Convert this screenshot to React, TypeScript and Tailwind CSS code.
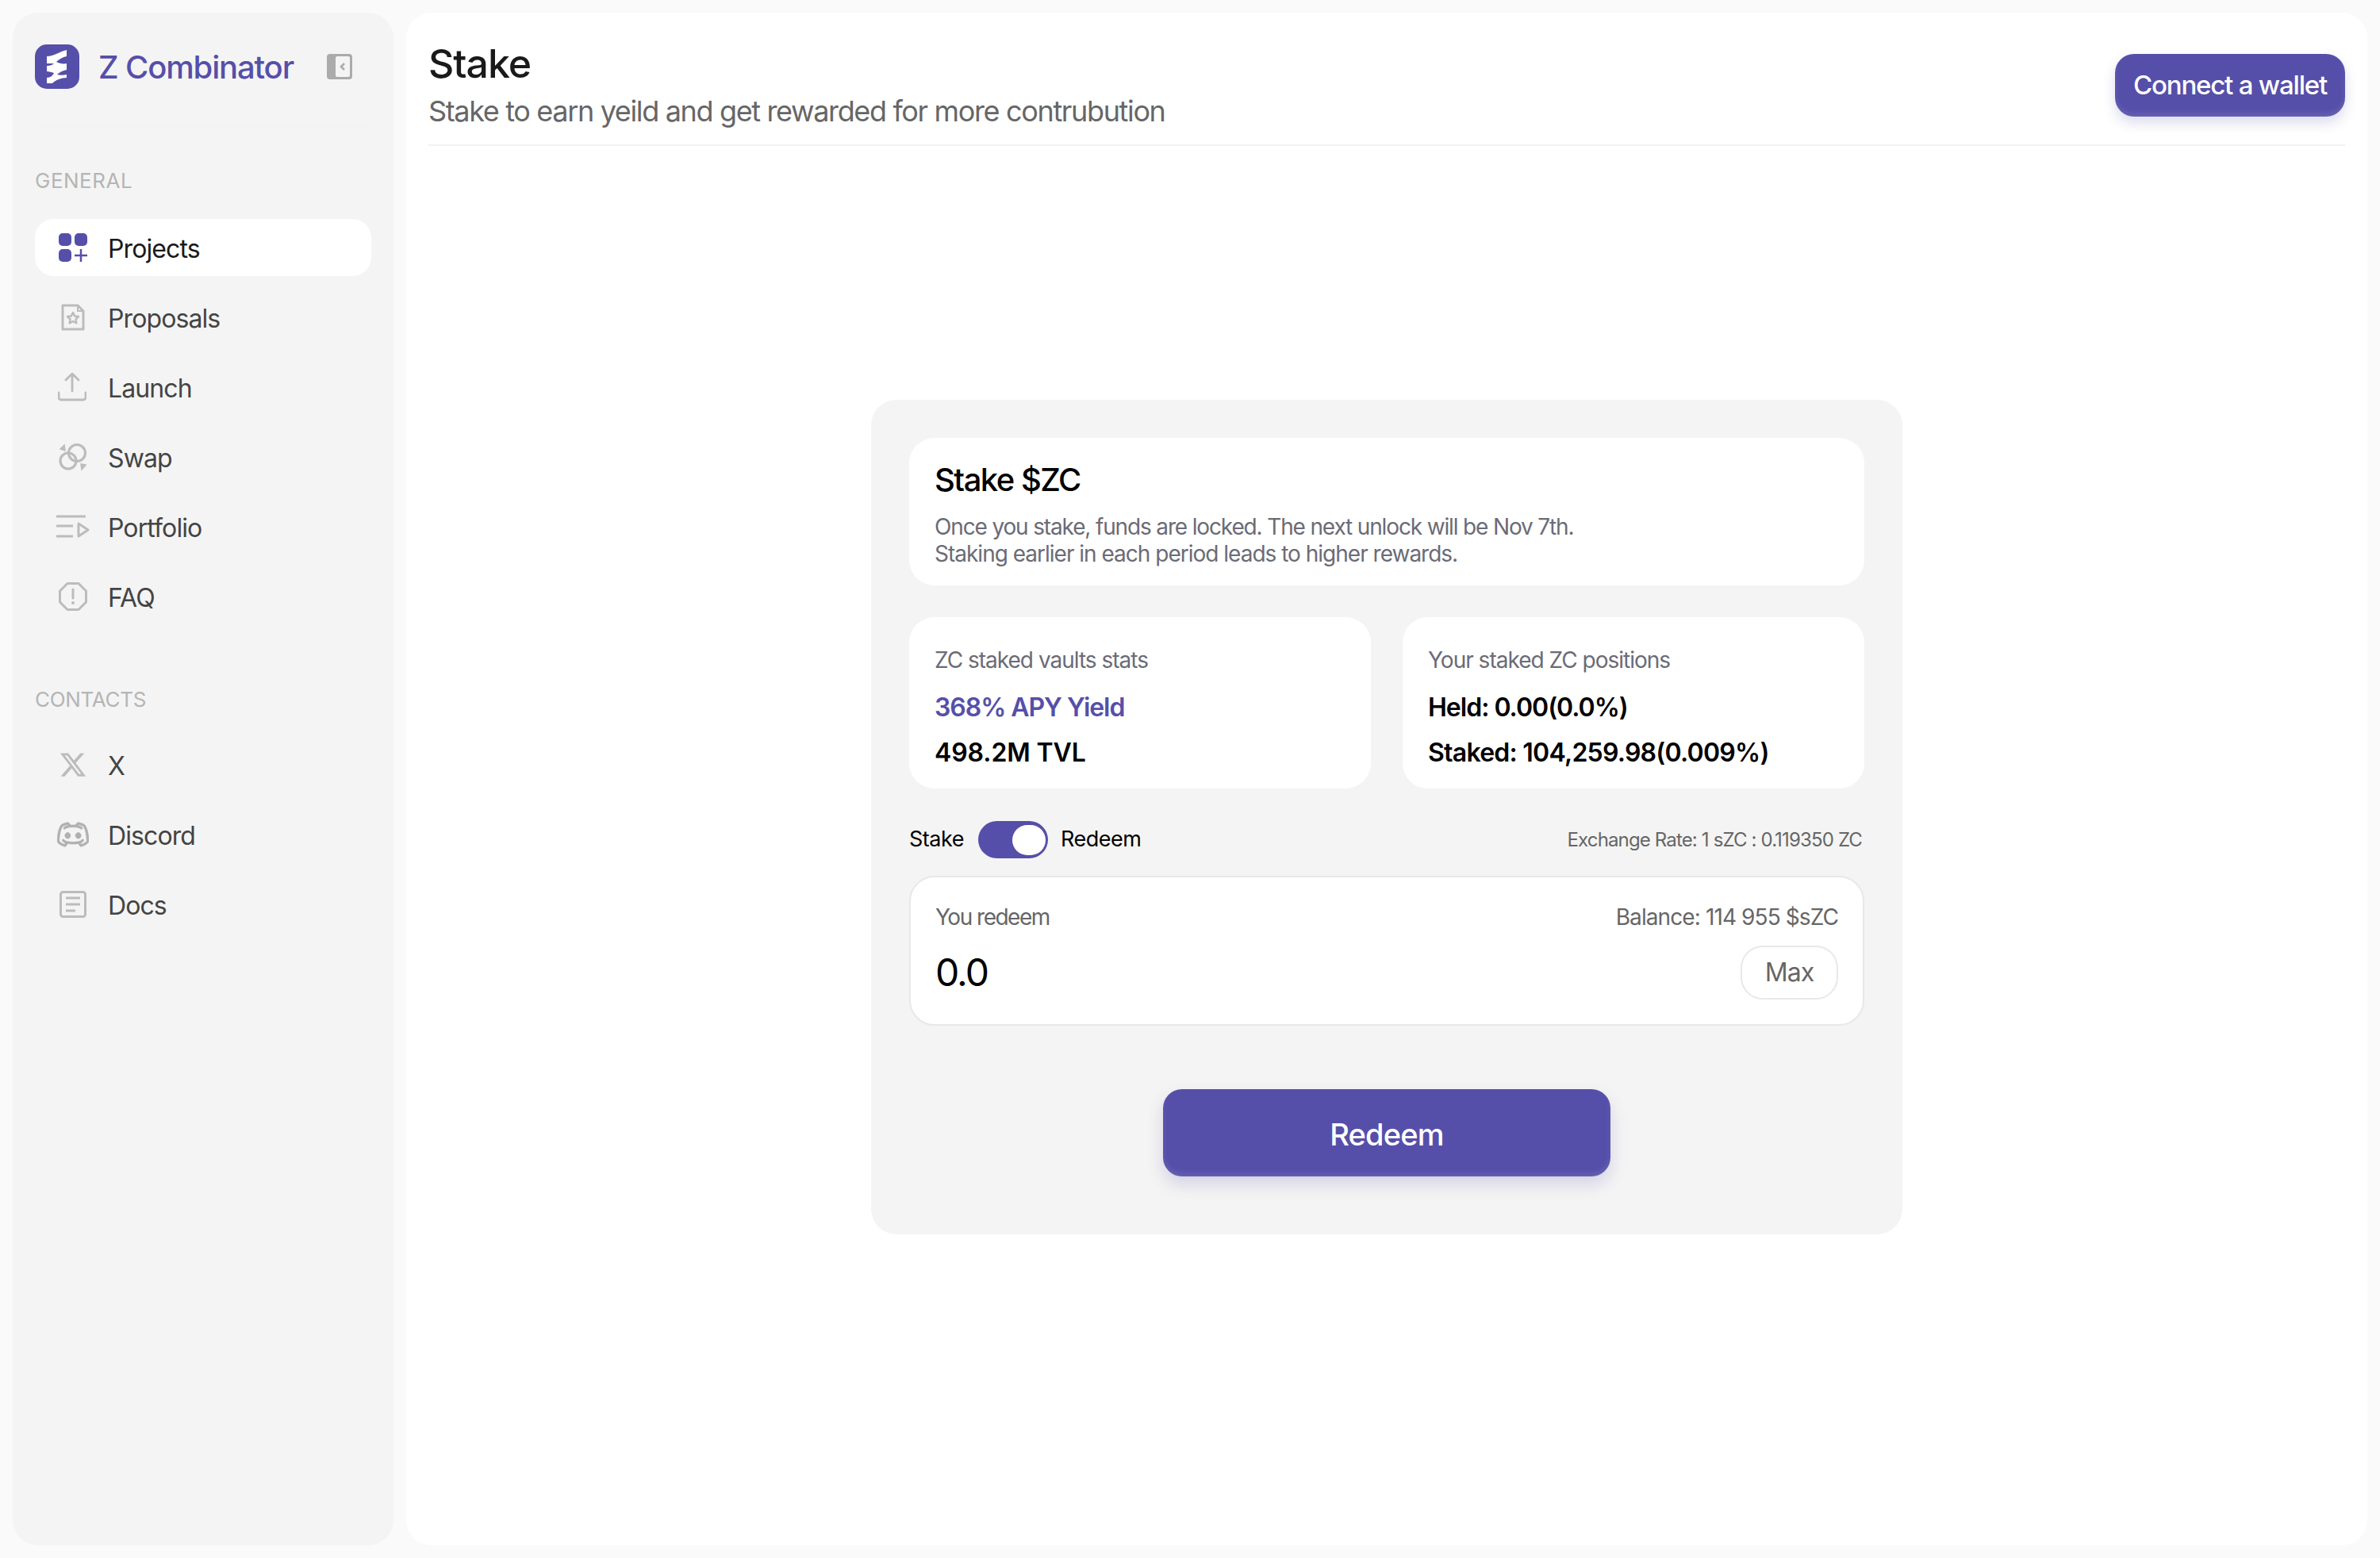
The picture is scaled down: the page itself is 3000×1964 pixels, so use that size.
import { FaXTwitter } from 'react-icons/fa6'
import { RxDiscordLogo } from 'react-icons/rx'

const sans = "font-['Inter',sans-serif]"

const Logo = () => (
  <svg viewBox="0 0 56 56" className="h-14 w-14 shrink-0">
    <rect width="56" height="56" rx="15" fill="#564fa9" />
    <path d="M15 15C24 15 31 9 40 7V15C35 16 30 19 27 22C31 24 36 25 40 24V32C35 33 31 35 28 38C32 39 36 39 40 38V42C33 42 26 45 22 49H15V42C19 42 23 39 24 36C21 35 18 34 15 34V27C19 27 22 26 24 24C21 24 18 24 15 24Z" fill="#fff" />
  </svg>
)

const CollapseIcon = () => (
  <svg viewBox="0 0 32 32" className="h-8 w-8">
    <rect width="32" height="32" rx="4" fill="#ababab" />
    <rect x="11" y="3" width="18" height="26" rx="2" fill="#f4f4f4" />
    <path d="M22 12l-4 4 4 4" fill="none" stroke="#ababab" strokeWidth="2.5" />
  </svg>
)

const ProjectsIcon = () => (
  <svg viewBox="0 0 36 36" className="h-9 w-9">
    <rect width="16" height="16" rx="5" fill="#564fa9" />
    <rect x="20" width="16" height="16" rx="5" fill="#564fa9" />
    <rect y="20" width="16" height="16" rx="5" fill="#564fa9" />
    <path d="M28 20v16M20 28h16" stroke="#564fa9" strokeWidth="2.5" />
  </svg>
)

const gray = '#bcbcbc'

const ProposalsIcon = () => (
  <svg viewBox="0 0 36 36" className="h-9 w-9" fill="none" stroke={gray} strokeWidth="3">
    <path d="M5 3h19l7 7v23H5z" strokeLinejoin="round" />
    <path d="M24 3v7h7" strokeWidth="2" />
    <path d="M18 12l2.200 4.400 4.800.7-3.500 3.400.8 4.800-4.300-2.300-4.300 2.300.8-4.800-3.500-3.400 4.800-.7z" strokeWidth="2.500" strokeLinejoin="round" />
  </svg>
)

const LaunchIcon = () => (
  <svg viewBox="0 0 36 36" className="-ml-[3px] h-9 w-9" fill="none" stroke={gray} strokeWidth="2.800" strokeLinecap="round" strokeLinejoin="round">
    <path d="M18 23V2M10 9l8-8 8 8" />
    <path d="M1 25v6a3 3 0 0 0 3 3h28a3 3 0 0 0 3-3v-6" />
  </svg>
)

const SwapIcon = () => (
  <svg viewBox="0 0 36 36" className="h-9 w-9" fill="none" stroke={gray} strokeWidth="3.200">
    <circle cx="12" cy="23" r="10" />
    <circle cx="23" cy="13" r="10.500" />
    <path d="M2 8l5-5 1 7zM34 28l-5 6-1-7z" fill={gray} strokeWidth="1.500" />
  </svg>
)

const PortfolioIcon = () => (
  <svg viewBox="0 0 42 30" className="h-[30px] w-[42px]" fill="none" stroke={gray} strokeWidth="3">
    <path d="M0 2h37M0 14h21M0 27h21" />
    <path d="M28 11l12 8-12 8z" strokeLinejoin="round" />
  </svg>
)

const FaqIcon = () => (
  <svg viewBox="0 0 36 36" className="h-9 w-9" fill="none" stroke={gray} strokeWidth="3">
    <path d="M11 1.500h14L34.500 11v14L25 34.500H11L1.500 25V11z" strokeLinejoin="round" />
    <path d="M18 9v11" strokeWidth="3" strokeLinecap="round" />
    <circle cx="18" cy="26" r="2" fill={gray} stroke="none" />
  </svg>
)

const DocsIcon = () => (
  <svg viewBox="0 0 34 34" className="h-[34px] w-[34px]" fill="none" stroke={gray} strokeWidth="3">
    <rect x="1.500" y="1.500" width="31" height="31" rx="3" />
    <path d="M8 9h18M8 17h18M8 25h12" />
  </svg>
)

const general = [
  { label: 'Proposals', icon: <ProposalsIcon /> },
  { label: 'Launch', icon: <LaunchIcon /> },
  { label: 'Swap', icon: <SwapIcon /> },
  { label: 'Portfolio', icon: <PortfolioIcon /> },
  { label: 'FAQ', icon: <FaqIcon /> },
]

const contacts = [
  { label: 'X', icon: <FaXTwitter size={36} color={gray} /> },
  { label: 'Discord', icon: <RxDiscordLogo size={40} color="#b0b0b0" stroke="#b0b0b0" strokeWidth={0.3} /> },
  { label: 'Docs', icon: <DocsIcon /> },
]

const NavItem: React.FC<{ label: string; icon: React.ReactNode; active?: boolean }> = ({ label, icon, active }) => (
  <div className={`flex h-[72px] items-center rounded-3xl ${active ? 'bg-white text-[#1a1a1a]' : 'text-[#444]'}`}>
    <div className="flex w-[92px] justify-center pl-1">{icon}</div>
    <span className="pt-[3px] text-[32px] tracking-[-0.9px]">{label}</span>
  </div>
)

const SectionLabel: React.FC<{ text: string; className: string }> = ({ text, className }) => (
  <p className={`text-[26px] leading-8 text-[#b5b5b5] ${className}`}>{text}</p>
)

const App: React.FC = () => {
  return (
    <div className={`flex h-[1964px] gap-4 bg-[#fafafa] p-4 ${sans}`}>
      <aside className="flex w-[480px] shrink-0 flex-col rounded-[32px] bg-[#f4f4f4] px-7 pt-10">
        <div className="flex h-14 items-center">
          <Logo />
          <span className="ml-6 pt-[2px] text-[40px] font-medium tracking-[-1.15px] text-[#564fa9]">Z Combinator</span>
          <div className="ml-auto mr-6"><CollapseIcon /></div>
        </div>
        <div className="mt-[47px] h-px bg-[#f1f1f1]" />
        <div className="mt-[52px]"><SectionLabel text="GENERAL" className="tracking-[0.5px]" /></div>
        <div className="mt-8 flex flex-col gap-4">
          <NavItem label="Projects" icon={<ProjectsIcon />} active />
          {general.map(item => <NavItem key={item.label} label={item.label} icon={item.icon} />)}
        </div>
        <div className="mt-[78px]"><SectionLabel text="CONTACTS" className="tracking-[-0.3px]" /></div>
        <div className="mt-[30px] flex flex-col gap-4">
          {contacts.map(item => <NavItem key={item.label} label={item.label} icon={item.icon} />)}
        </div>
      </aside>

      <main className="flex flex-1 flex-col rounded-[32px] bg-white px-7">
        <header className="flex h-[168px] items-start justify-between border-b-2 border-[#f1f1f1] pt-[34px]">
          <div>
            <h1 className="text-[50px] leading-[60px] font-medium tracking-[-1px] text-[#1a1a1a]">Stake</h1>
            <p className="mt-1 text-[36px] leading-[52px] tracking-[-1.35px] text-[#666]">Stake to earn yeild and get rewarded for more contrubution</p>
          </div>
          <button className="mt-[18px] h-[79px] w-[290px] rounded-3xl bg-[#564fa9] text-[33px] font-medium tracking-[-1.2px] text-white shadow-[inset_0_-4px_6px_rgba(255,255,255,0.1),0_8px_16px_rgba(86,79,169,0.2)]">Connect a wallet</button>
        </header>

        <div className="flex justify-center pt-[320px]">
          <section className="flex w-[1300px] flex-col rounded-[32px] bg-[#f4f4f4] p-12">
            <div className="h-[186px] rounded-[32px] bg-white px-8 pt-[28px]">
              <h2 className="text-[40px] leading-[50px] font-medium tracking-[-1.5px] text-black">Stake $ZC</h2>
              <div className="mt-[17px] text-[28px] leading-[34px] text-[#6b6b76]">
                <p className="tracking-[-1.15px]">Once you stake, funds are locked. The next unlock will be Nov 7th.</p>
                <p className="tracking-[-1px]">Staking earlier in each period leads to higher rewards.</p>
              </div>
            </div>

            <div className="mt-10 grid grid-cols-2 gap-10">
              <div className="h-[216px] rounded-[32px] bg-white px-8 pt-9">
                <p className="text-[28px] leading-9 tracking-[-1px] text-[#6b6b76]">ZC staked vaults stats</p>
                <p className="mt-[23px] text-[32px] leading-[38px] font-semibold tracking-[-1.05px] text-[#564fa9]">368% APY Yield</p>
                <p className="mt-[19px] text-[32px] leading-[38px] font-semibold tracking-[-0.1px] text-black">498.2M TVL</p>
              </div>
              <div className="h-[216px] rounded-[32px] bg-white px-8 pt-9">
                <p className="text-[28px] leading-9 tracking-[-1px] text-[#6b6b76]">Your staked ZC positions</p>
                <p className="mt-[23px] text-[32px] leading-[38px] font-semibold tracking-[-1px] text-black">Held: 0.00(0.0%)</p>
                <p className="mt-[19px] text-[32px] leading-[38px] font-semibold tracking-[-0.75px] text-black">Staked: 104,259.98(0.009%)</p>
              </div>
            </div>

            <div className="mt-[41px] flex h-[47px] items-center">
              <span className="text-[27px] tracking-[-0.5px] text-black">Stake</span>
              <div className="ml-[18px] flex h-[47px] w-[88px] items-center justify-end rounded-full bg-[#564fa9] pr-[3px]">
                <div className="h-[38px] w-[42px] rounded-full bg-white" />
              </div>
              <span className="ml-4 text-[27px] tracking-[-0.5px] text-black">Redeem</span>
              <span className="ml-auto mr-[3px] text-[24px] tracking-[-0.85px] text-[#666]">Exchange Rate: 1 sZC : 0.119350 ZC</span>
            </div>

            <div className="mt-[22px] h-[189px] rounded-[32px] border-2 border-[#e8e8e8] bg-white px-[31px] pt-[32px]">
              <div className="flex items-center justify-between text-[28px] leading-9 text-[#666]">
                <span className="tracking-[-1.5px]">You redeem</span>
                <span className="tracking-[-0.9px]">Balance: 114 955 $sZC</span>
              </div>
              <div className="mt-[18px] flex items-center justify-between">
                <span className="text-[48px] leading-[68px] tracking-[-2px] text-black">0.0</span>
                <button className="h-[68px] w-[123px] rounded-[28px] border-2 border-[#e8e8e8] text-[32px] tracking-[-1px] text-[#666]">Max</button>
              </div>
            </div>

            <button className="mt-[80px] mb-[25px] h-[110px] w-[564px] self-center rounded-3xl bg-[#564fa9] pt-1 text-[38px] font-medium tracking-[-0.8px] text-white shadow-[inset_0_-4px_6px_rgba(255,255,255,0.1),0_10px_20px_rgba(86,79,169,0.2)]">Redeem</button>
          </section>
        </div>
      </main>
    </div>
  )
}

export default App
